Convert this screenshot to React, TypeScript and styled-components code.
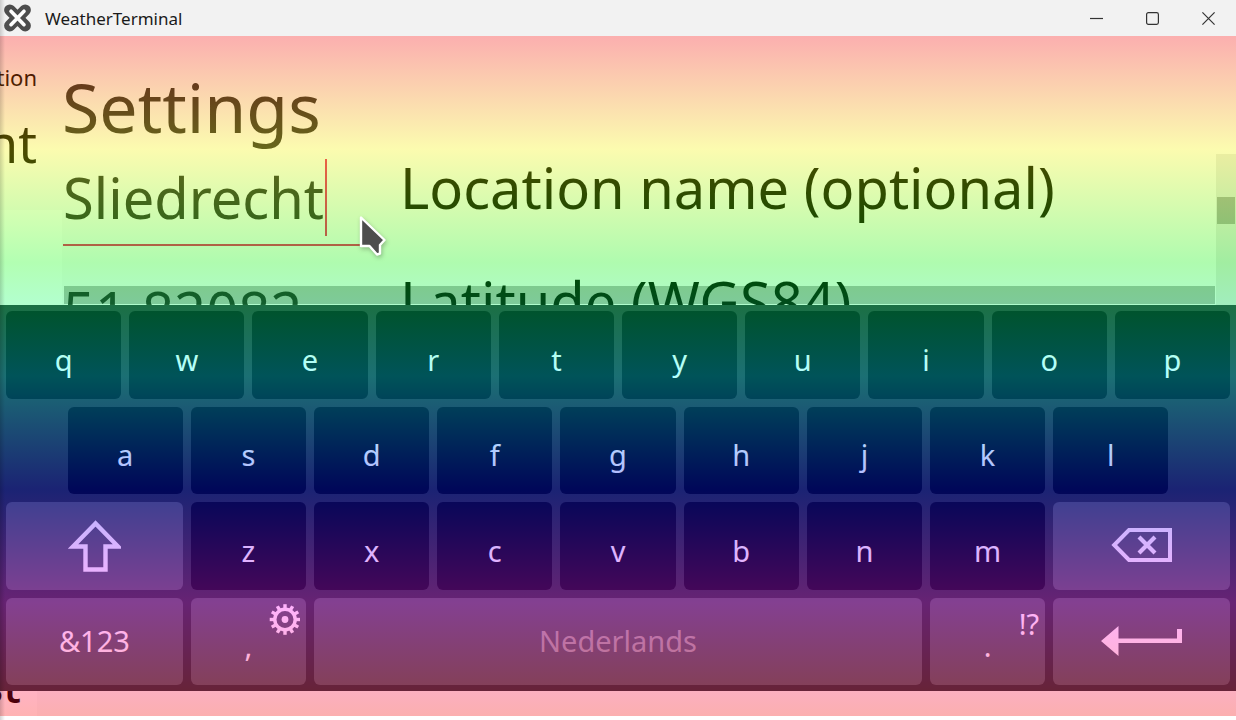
import React from "react";
import styled, { createGlobalStyle } from "styled-components";

const GlobalStyle = createGlobalStyle`
  *, *::before, *::after { box-sizing: border-box; }
  body { margin: 0; background: #fff; overflow: hidden; }
  body, button, input { font-family: "Noto Sans", "Open Sans", sans-serif; }
`;

const Window = styled.div`
  position: relative;
  display: flex;
  flex-direction: column;
  height: 100vh;
  padding-bottom: 4px;
  overflow: hidden;

  &::after {
    content: "";
    position: absolute;
    inset: 0 auto 0 0;
    width: 5px;
    background: linear-gradient(90deg, rgba(0, 0, 0, 0.16), rgba(0, 0, 0, 0));
    pointer-events: none;
  }
`;

const TitleBar = styled.header`
  display: flex;
  align-items: center;
  flex: none;
  height: 36px;
  padding-left: 4px;
  background: #f2f2f2;
`;

const Title = styled.span`
  flex: 1;
  margin-left: 14px;
  padding-top: 2px;
  font-size: 17px;
  line-height: 24px;
  color: #1a1a1a;
`;

const CaptionButton = styled.button`
  display: flex;
  align-items: center;
  justify-content: center;
  width: 56px;
  height: 36px;
  padding: 0;
  border: 0;
  background: none;
  color: #333;
`;

const Client = styled.div`
  position: relative;
  display: flex;
  flex: 1;
  min-height: 0;
  background: #fafafa;
`;

const Rainbow = styled.div`
  position: absolute;
  inset: 0;
  opacity: 0.3;
  background: linear-gradient(#f00, #ff0, #0f0, #0ff, #00f, #f0f, #f00);
  pointer-events: none;
`;

const Sidebar = styled.aside`
  display: flex;
  flex-direction: column;
  align-items: flex-end;
  flex: none;
  width: 62px;
  padding: 24px 25px 0 0;
  overflow: hidden;
  white-space: nowrap;
  background:
    linear-gradient(#fafafa, #fafafa) right bottom / 25px 26px no-repeat,
    linear-gradient(#fafafa 174px, #fff 174px);
`;

const SideCaption = styled.span`
  font-size: 22px;
  line-height: 34px;
`;

const SideName = styled.span`
  margin-top: 15px;
  font-size: 52px;
  line-height: 68px;
`;

const SideForecast = styled.span`
  margin: auto 16px 0 0;
  font-size: 46px;
  font-weight: 500;
  line-height: 62px;
`;

const Panel = styled.main`
  display: flex;
  flex-direction: column;
  flex: 1;
  min-width: 0;
  padding: 23px 0 411px;
`;

const Heading = styled.h1`
  flex: none;
  margin: 0 0 -1px;
  font-size: 68px;
  font-weight: 400;
  line-height: 96px;
  color: #262626;
`;

const Scroller = styled.section`
  position: relative;
  flex: 1;
  min-height: 0;
  padding: 5px 20px 0 1px;
  overflow: hidden;
`;

const Setting = styled.div`
  display: flex;
  align-items: flex-start;
  gap: 25px;
  margin-bottom: 27px;
`;

const Field = styled.div`
  position: relative;
  flex: none;
  width: 312px;
`;

const Entry = styled.input<{ $active?: boolean }>`
  display: block;
  width: 100%;
  height: 87px;
  padding: 0 0 10px;
  border: 0;
  border-bottom: 2px solid ${(p) => (p.$active ? "#e91e63" : "transparent")};
  outline: 0;
  background: none;
  font-size: 56px;
  color: #262626;
`;

const Caret = styled.span`
  position: absolute;
  top: 0;
  left: 262px;
  width: 2px;
  height: 77px;
  background: #e91e63;
`;

const Label = styled.label`
  font-size: 56px;
  line-height: 56px;
  white-space: nowrap;
  color: #000;
`;

const VerticalTrack = styled.div`
  position: absolute;
  top: 0;
  right: 0;
  bottom: 0;
  width: 20px;
  padding: 43px 1px 0;
  background: rgba(0, 0, 0, 0.08);
`;

const VerticalThumb = styled.div`
  height: 27px;
  background: rgba(0, 0, 0, 0.28);
`;

const HorizontalThumb = styled.div`
  position: absolute;
  right: 21px;
  bottom: 1px;
  left: 2px;
  height: 18px;
  background: rgba(0, 0, 0, 0.28);
`;

const Keyboard = styled.div`
  position: absolute;
  right: 0;
  bottom: 25px;
  left: 0;
  display: grid;
  grid-template-columns: repeat(20, minmax(0, 1fr));
  grid-template-rows: repeat(4, 1fr);
  gap: 8px;
  height: 386px;
  padding: 6px;
  background: #263238;
`;

const Key = styled.button<{ $span?: number; $start?: number; $light?: boolean; $low?: boolean; $dim?: boolean }>`
  position: relative;
  display: flex;
  align-items: center;
  justify-content: center;
  grid-column: ${(p) => p.$start ?? "auto"} / span ${(p) => p.$span ?? 2};
  padding: ${(p) => (p.$low ? "10px" : "0")} 0 0;
  border: 0;
  border-radius: 6px;
  background: ${(p) => (p.$light ? "#4f5b62" : "#000a12")};
  font-size: 29px;
  line-height: 40px;
  color: ${(p) => (p.$dim ? "#a4a4a4" : "#fff")};
`;

const Hint = styled.span`
  position: absolute;
  top: 6px;
  right: 6px;
  display: flex;
`;

const Pointer = styled.svg`
  position: absolute;
  top: 213px;
  left: 357px;
  filter: drop-shadow(1px 2px 2px rgba(0, 0, 0, 0.25));
  pointer-events: none;
`;

const AppIcon = () => (
  <svg width="27" height="28" viewBox="0 0 27 28" fill="none" strokeLinecap="round" aria-hidden="true">
    <path d="M5.8 6.1 21.2 21.7M21.2 6.1 5.8 21.7" stroke="#4d4d4d" strokeWidth="11.4" />
    <path d="M7 7.2 20 20.7M20 7.2 7 20.7" stroke="#fff" strokeWidth="3.6" />
  </svg>
);

const ShiftIcon = () => (
  <svg width="54" height="52" viewBox="0 0 54 52" fill="none" aria-hidden="true">
    <path d="M28.5 3.5 6 26.5H18.5V49.5H38.5V26.5H51Z" stroke="currentColor" strokeWidth="4.4" />
  </svg>
);

const BackspaceIcon = () => (
  <svg width="62" height="36" viewBox="0 0 62 36" fill="none" stroke="currentColor" aria-hidden="true">
    <path d="M18 2H59V32H18L3.2 17Z" strokeWidth="4" />
    <path d="M28 9 44 25M44 9 28 25" strokeWidth="4.2" />
  </svg>
);

const EnterIcon = () => (
  <svg width="82" height="32" viewBox="0 0 82 32" fill="currentColor" aria-hidden="true">
    <path d="M0 16 17.5 1V13.5H76V4H81V18H17.5V31Z" />
  </svg>
);

const GearIcon = () => (
  <svg width="31" height="31" viewBox="-16 -15.5 31 31" fill="none" stroke="currentColor" aria-hidden="true">
    <circle r="10.2" strokeWidth="3.4" />
    {Array.from({ length: 12 }, (_, i) => (
      <path key={i} d="M0 -11V-15.3" strokeWidth="3.4" transform={`rotate(${i * 30})`} />
    ))}
    <circle r="3.4" fill="currentColor" stroke="none" />
  </svg>
);

export default function App() {
  return (
    <Window>
      <GlobalStyle />
      <TitleBar>
        <AppIcon />
        <Title>WeatherTerminal</Title>
        <CaptionButton aria-label="Minimize">
          <svg width="13" height="13" viewBox="0 0 13 13" stroke="currentColor">
            <path d="M0 6.5H13" strokeWidth="1.2" />
          </svg>
        </CaptionButton>
        <CaptionButton aria-label="Maximize">
          <svg width="13" height="13" viewBox="0 0 13 13" fill="none" stroke="currentColor">
            <rect x=".6" y=".6" width="11.8" height="11.8" rx="1.8" strokeWidth="1.2" />
          </svg>
        </CaptionButton>
        <CaptionButton aria-label="Close">
          <svg width="13" height="13" viewBox="0 0 13 13" stroke="currentColor">
            <path d="M.4 .4 12.6 12.6M12.6 .4 .4 12.6" strokeWidth="1.2" />
          </svg>
        </CaptionButton>
      </TitleBar>

      <Client>
        <Sidebar>
          <SideCaption>Location</SideCaption>
          <SideName>Sliedrecht</SideName>
          <SideForecast>Forecast</SideForecast>
        </Sidebar>

        <Panel>
          <Heading>Settings</Heading>
          <Scroller>
            <Setting>
              <Field>
                <Entry id="name" $active defaultValue="Sliedrecht" />
                <Caret />
              </Field>
              <Label htmlFor="name">Location name (optional)</Label>
            </Setting>
            <Setting>
              <Field>
                <Entry id="latitude" defaultValue="51.82082" />
              </Field>
              <Label htmlFor="latitude">Latitude (WGS84)</Label>
            </Setting>
            <VerticalTrack>
              <VerticalThumb />
            </VerticalTrack>
            <HorizontalThumb />
          </Scroller>
        </Panel>

        <Keyboard>
          {[..."qwertyuiop"].map((c) => (
            <Key key={c} $low>{c}</Key>
          ))}
          {[..."asdfghjkl"].map((c, i) => (
            <Key key={c} $low $start={2 + i * 2}>{c}</Key>
          ))}
          <Key $light $span={3} $start={1} aria-label="Shift"><ShiftIcon /></Key>
          {[..."zxcvbnm"].map((c) => (
            <Key key={c} $low>{c}</Key>
          ))}
          <Key $light $span={3} aria-label="Backspace"><BackspaceIcon /></Key>
          <Key $light $span={3}>&amp;123</Key>
          <Key $light $low>
            ,
            <Hint><GearIcon /></Hint>
          </Key>
          <Key $light $dim $span={10}>Nederlands</Key>
          <Key $light $low>
            .
            <Hint>!?</Hint>
          </Key>
          <Key $light $span={3} aria-label="Enter"><EnterIcon /></Key>
        </Keyboard>

        <Rainbow />
      </Client>

      <Pointer width="32" height="46" viewBox="0 0 32 46" aria-hidden="true">
        <path
          d="M4 4.5V33H12.5L20 41.5 23 40.5V32L27.5 27Z"
          fill="#4d4d4d"
          stroke="#fff"
          strokeWidth="2.4"
          strokeLinejoin="round"
        />
      </Pointer>
    </Window>
  );
}
